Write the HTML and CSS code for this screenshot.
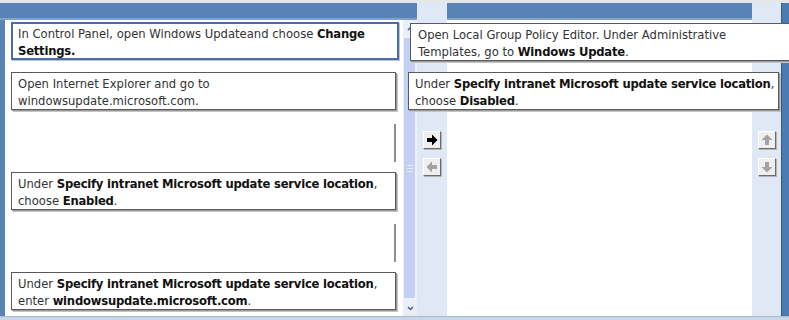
FILE: index.html
```
<!DOCTYPE html>
<html lang="en">
<head>
  <meta charset="UTF-8" />
  <title>Drag and drop</title>
  <link rel="stylesheet" href="styles.css">
</head>
<body>
  <div class="topline"></div>
  <div class="main">
    <div class="source">
      <div class="band"></div>
      <div class="source-body">
        <div class="list">
          <div class="card selected">In Control Panel, open Windows Updateand choose <b>Change</b><br><b>Settings.</b></div>
          <div class="card">Open Internet Explorer and go to<br>windowsupdate.microsoft.com.</div>
          <div class="slot"></div>
          <div class="card">Under <b>Specify intranet Microsoft update service location</b>,<br>choose <b>Enabled</b>.</div>
          <div class="slot"></div>
          <div class="card">Under <b>Specify intranet Microsoft update service location</b>,<br>enter <b>windowsupdate.microsoft.com</b>.</div>
        </div>
        <div class="scrollbar">
          <div class="sb-btn">
            <svg width="7" height="5" viewBox="0 0 7 5"><polyline points="1,4 3.5,1.5 6,4" fill="none" stroke="#4d6185" stroke-width="1.5"/></svg>
          </div>
          <div class="sb-thumb">
            <div class="grip"></div>
          </div>
          <div class="sb-btn">
            <svg width="7" height="5" viewBox="0 0 7 5"><polyline points="1,1 3.5,3.5 6,1" fill="none" stroke="#4d6185" stroke-width="1.5"/></svg>
          </div>
        </div>
      </div>
    </div>

    <div class="side">
      <div class="tool-btn">
        <svg width="12" height="12" viewBox="0 0 12 12"><polygon points="1,4 6,4 6,0.5 11.5,6 6,11.5 6,8 1,8" fill="#000"/></svg>
      </div>
      <div class="tool-btn">
        <svg width="12" height="12" viewBox="0 0 12 12"><polygon points="11,4 6,4 6,0.5 0.5,6 6,11.5 6,8 11,8" fill="#a3a3a3"/></svg>
      </div>
    </div>

    <div class="target">
      <div class="band"></div>
      <div class="target-body"></div>
    </div>

    <div class="side side-right">
      <div class="tool-btn">
        <svg width="12" height="12" viewBox="0 0 12 12"><polygon points="4,11 4,6 0.5,6 6,0.5 11.5,6 8,6 8,11" fill="#a3a3a3"/></svg>
      </div>
      <div class="tool-btn">
        <svg width="12" height="12" viewBox="0 0 12 12"><polygon points="4,1 4,6 0.5,6 6,11.5 11.5,6 8,6 8,1" fill="#a3a3a3"/></svg>
      </div>
    </div>

    <div class="edge"></div>
  </div>
  <div class="bottomline"></div>

  <!-- answers placed over the target area -->
  <div class="card answer answer-1">Open Local Group Policy Editor. Under Administrative<br>Templates, go to <b>Windows Update</b>.</div>
  <div class="card answer answer-2">Under <b>Specify intranet Microsoft update service location</b>,<br>choose <b>Disabled</b>.</div>
</body>
</html>
```

FILE: styles.css
```
html, body {
  margin: 0;
  padding: 0;
  width: 789px;
  height: 320px;
  overflow: hidden;
  font-family: "DejaVu Sans", Verdana, sans-serif;
  font-size: 11.6px;
}
body {
  position: relative;
  display: flex;
  flex-direction: column;
  background-color: #ffffff;
}
.topline {
  height: 3px;
  flex-shrink: 0;
  background-color: #e4e6e9;
}
.main {
  display: flex;
  height: 313px;
  flex-shrink: 0;
}
.bottomline {
  height: 3px;
  flex-shrink: 0;
  background-color: #c9d6e6;
  border-top: 1px solid #a9bcd3;
}
.band {
  height: 15px;
  flex-shrink: 0;
  background-color: #5784b5;
  border-bottom: 2px solid #7fa2c8;
}
.source {
  width: 417px;
  display: flex;
  flex-direction: column;
  background-color: #5784b5;
}
.source-body {
  flex: 1;
  min-height: 0;
  overflow: hidden;
  display: flex;
  margin-left: 5px;
  background-color: #ffffff;
}
.list {
  width: 398px;
  padding: 2px 0 0 6px;
  box-sizing: border-box;
}
.card {
  width: 385px;
  height: 38px;
  box-sizing: border-box;
  padding: 3px 6px 0 6px;
  margin-bottom: 12px;
  border: 1px solid #5a5a5a;
  box-shadow: 1px 1px 0 #9a9a9a, 2px 2px 0 #c4c4c4;
  background-color: #ffffff;
  color: #333333;
  line-height: 17px;
  white-space: nowrap;
}
.card b {
  color: #111111;
  letter-spacing: -0.22px;
}
.card.selected {
  width: 388px;
  border: 2px solid #4a6ea3;
  padding: 2px 5px 0 5px;
  box-shadow: 1px 1px 0 #b8c6da;
}
.slot {
  width: 385px;
  height: 38px;
  margin-bottom: 12px;
  box-sizing: border-box;
  border-right: 2px solid #8f8f8f;
  transform: translateY(2px);
}
.scrollbar {
  width: 14px;
  display: flex;
  flex-direction: column;
  background-color: #eef1f7;
}
.sb-btn {
  height: 16px;
  display: flex;
  align-items: center;
  justify-content: center;
  background-color: #e9eef8;
}
.sb-thumb {
  flex: 1;
  margin: 2px 2px 2px 1px;
  background-color: #c3d0f5;
  border-radius: 1px;
  display: flex;
  align-items: center;
  justify-content: center;
}
.grip {
  width: 6px;
  height: 5px;
  border-top: 1px solid #e8eefc;
  border-bottom: 1px solid #e8eefc;
  position: relative;
}
.grip::after {
  content: "";
  position: absolute;
  left: 0;
  right: 0;
  top: 2px;
  border-top: 1px solid #e8eefc;
}
.side {
  width: 30px;
  background-color: #dfe8f4;
  display: flex;
  flex-direction: column;
  align-items: center;
  padding-top: 128px;
  gap: 9px;
  box-sizing: border-box;
}
.side-right {
  width: 29px;
}
.tool-btn {
  width: 18px;
  height: 18px;
  box-sizing: border-box;
  background-color: #efefef;
  border: 1px solid;
  border-color: #ffffff #6b6b6b #6b6b6b #ffffff;
  box-shadow: 1px 1px 0 #b5b5b5;
  display: flex;
  align-items: center;
  justify-content: center;
}
.target {
  width: 305px;
  display: flex;
  flex-direction: column;
}
.target-body {
  flex: 1;
  background-color: #ffffff;
}
.edge {
  width: 8px;
  background-color: #4d7bb1;
  border-left: 1px solid #2f5a8e;
  box-sizing: border-box;
}
.answer {
  position: absolute;
  margin: 0;
}
.answer-1 {
  left: 410px;
  top: 23px;
  width: 390px;
  height: 38px;
  padding-left: 7px;
}
.answer-2 {
  left: 408px;
  top: 72px;
  width: 371px;
}
```
